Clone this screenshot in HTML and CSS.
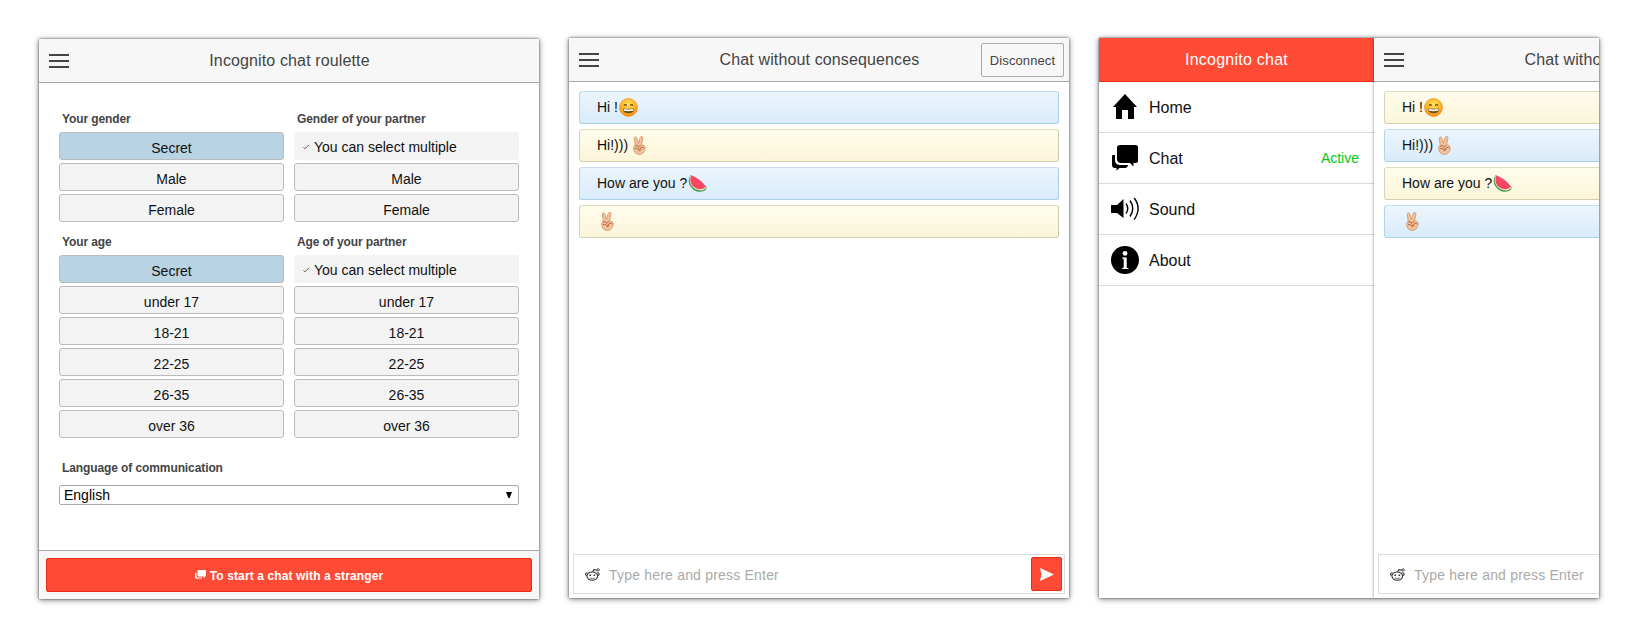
FILE: index.html
```html
<!DOCTYPE html>
<html lang="en">
<head>
<meta charset="utf-8">
<title>Incognito chat</title>
<link rel="stylesheet" href="styles.css">
</head>
<body>
<svg class="defs" width="0" height="0">
  <defs>
    <radialGradient id="face" cx=".5" cy=".35" r=".65"><stop offset="0" stop-color="#ffe35c"/><stop offset=".6" stop-color="#fdb827"/><stop offset="1" stop-color="#ee8411"/></radialGradient>
    <linearGradient id="melon" x1="1" y1="0" x2="0" y2="1"><stop offset="0" stop-color="#f0506a"/><stop offset="1" stop-color="#fb3f5e"/></linearGradient>
    <symbol id="smile" viewBox="0 0 19 19">
      <circle cx="9.5" cy="9.5" r="9" fill="url(#face)" stroke="#ef9233" stroke-width=".7"/>
      <path d="M5 7.6q1.3-2.2 2.6 0M11.3 7.6q1.3-2.2 2.6 0" fill="none" stroke="#6b3a10" stroke-width="1.2"/>
      <path d="M3.8 10.4q5.700.9 11.400 0-.6 4.900-5.700 4.900t-5.700-4.900z" fill="#6e4a1a"/>
      <path d="M4.500 11.100q5 .9 10 0l-.5 1.700q-4.500.8-9 0z" fill="#fff"/>
    </symbol>
    <symbol id="peace" viewBox="0 0 19 19">
      <path d="M4.2 10.2 5.3 9.400 4.300 2.800Q4.200 1 5.400.9 6.600.8 6.900 2.400L8.400 7.300 10.300 1.400Q10.800.1 12 .5 13.200.9 12.900 2.400L11.500 8.600Q14.800 9.200 15.200 11.200 15.500 14.700 13 17.100 11 18.800 8 18.300 5.400 17.900 4.100 14.900 2.900 11.700 4.200 10.200z" fill="#f3c39b" stroke="#cf8f66" stroke-width=".8"/>
      <path d="M5 10.300q2.500-1.600 3.600.4l2.600-1.200M4.900 12.400q2 1.300 3.700-.9M7.800 13.800q2.300-.4 3.900-2.400 1.600-.4 2.600.6M9 15.400q.4-1.500 2.400-1.900" fill="none" stroke="#a95f38" stroke-width=".9"/>
    </symbol>
    <symbol id="melon-slice" viewBox="0 0 19 19">
      <path d="M2.600 1Q-1.300 7 2.600 12.500 8 19.800 15.800 17.100 18.200 16 18.800 12.900z" fill="#3f9142"/>
      <path d="M3 1Q-.1 7 3.500 11.800 8.600 18 15.500 15.900 17.700 15 18.400 12.900z" fill="#dff0c3"/>
      <path d="M3.400 1.300Q1 7 4.200 11.200 9 16.500 15 14.800 17 14.200 17.900 12.600 12.500 5 3.400 1.300z" fill="url(#melon)"/>
    </symbol>
    <symbol id="burger" viewBox="0 0 20 14"><path d="M0 0h20v2H0zM0 6h20v2H0zM0 12h20v2H0z" fill="#444"/></symbol>
    <symbol id="alien" viewBox="0 0 14 12">
      <ellipse cx="6.800" cy="7.500" rx="5" ry="3.900" fill="#fff" stroke="#333" stroke-width="1"/>
      <path d="M2.300 4.300Q.3 4.200.6 6.200L1.500 7M11.300 4.300q2-.1 1.900 1.700L12.300 7M7 3.500 8.300 1.500 11.300 2" fill="none" stroke="#333" stroke-width="1"/>
      <circle cx="12.300" cy="1.700" r="1.100" fill="none" stroke="#333" stroke-width=".8"/>
      <path d="M4.100 6h1.500v1.500H4.100zM8 6h1.500v1.500H8z" fill="#333"/>
      <path d="M4.500 9.200q2.300 1.300 4.600 0" fill="none" stroke="#555" stroke-width=".8"/>
    </symbol>
  </defs>
</svg>

<main class="screens">
  <section class="screen setup">
    <header class="bar"><svg class="burger"><use href="#burger"/></svg><h1>Incognito chat roulette</h1></header>
    <div class="form">
      <div class="columns">
        <div class="group">
          <h2>Your gender</h2>
          <div class="option selected">Secret</div><div class="option">Male</div><div class="option">Female</div>
        </div>
        <div class="group">
          <h2>Gender of your partner</h2>
          <div class="hint"><svg class="tick" viewBox="0 0 8 6"><path d="M.5 3.500 2.300 5 7 .5" fill="none" stroke="#444" stroke-width=".9"/></svg>You can select multiple</div><div class="option">Male</div><div class="option">Female</div>
        </div>
        <div class="group">
          <h2>Your age</h2>
          <div class="option selected">Secret</div><div class="option">under 17</div><div class="option">18-21</div><div class="option">22-25</div><div class="option">26-35</div><div class="option">over 36</div>
        </div>
        <div class="group">
          <h2>Age of your partner</h2>
          <div class="hint"><svg class="tick" viewBox="0 0 8 6"><path d="M.5 3.500 2.300 5 7 .5" fill="none" stroke="#444" stroke-width=".9"/></svg>You can select multiple</div><div class="option">under 17</div><div class="option">18-21</div><div class="option">22-25</div><div class="option">26-35</div><div class="option">over 36</div>
        </div>
      </div>
      <h2 class="language">Language of communication</h2>
      <div class="select"><span>English</span><svg width="6" height="6" viewBox="0 0 6 6"><path d="M0 0h6L3.600 6H2.400z"/></svg></div>
    </div>
    <footer class="start">
      <div class="start-button"><svg width="11" height="10" viewBox="0 0 11 10"><path d="M3.500 0H10q1 0 1 1v4.500q0 1-1 1L9.500 8 8 6.500H3.500q-1 0-1-1V1q0-1 1-1zM1.500 2.500V6q0 1.500 1.500 1.500h4V8.500H3L2 9.500V8.500H1Q0 8.500 0 7.500v-4q0-1 1.500-1z" fill="#fff"/></svg><span>To start a chat with a stranger</span></div>
    </footer>
  </section>

  <section class="screen">
    <div class="chat">
      <header class="bar"><svg class="burger"><use href="#burger"/></svg><h1>Chat without consequences</h1><div class="disconnect">Disconnect</div></header>
      <div class="messages">
        <div class="message blue">Hi !<svg><use href="#smile"/></svg></div>
        <div class="message yellow">Hi!)))<svg class="hand"><use href="#peace"/></svg></div>
        <div class="message blue">How are you ?<svg><use href="#melon-slice"/></svg></div>
        <div class="message yellow"><svg><use href="#peace"/></svg></div>
      </div>
      <div class="composer"><svg class="alien"><use href="#alien"/></svg><span>Type here and press Enter</span><div class="send"><svg width="14" height="13" viewBox="0 0 14 13"><path d="M0 0 14 6.500 0 13 1.500 6.500z" fill="#fff"/></svg></div></div>
    </div>
  </section>

  <section class="screen split">
    <nav class="menu">
      <h1>Incognito chat</h1>
      <div class="item"><svg viewBox="0 0 28 28"><path d="M14 1 26 14H23V26H17V17H11V26H5V14H2z"/></svg><span>Home</span></div>
      <div class="item"><svg viewBox="0 0 28 28"><path d="M9 1H24.500Q27 1 27 3.500V16.500Q27 19 24.500 19H22.500V22.500L19 19H9.500Q6 18.500 6 15V4Q6 1 9 1zM1.500 11H4V16.500Q4.500 20.500 8.500 21H17Q17 23.500 14.500 24H8.500L5.500 26.500V24H3.500Q1 23.500 1 21.500V12z"/></svg><span>Chat</span><span class="active">Active</span></div>
      <div class="item"><svg viewBox="0 0 28 28"><path d="M0 10H6L12.500 4V23L6 18H0z"/><path d="M15 8.500Q18.500 13.500 15 18.500M19 5.500Q24.500 13.500 19 21.500M23.200 3Q31 13.500 23.200 24.500" fill="none" stroke="#000" stroke-width="1.400"/></svg><span>Sound</span></div>
      <div class="item"><svg viewBox="0 0 28 28"><circle cx="14" cy="14" r="14"/><circle cx="14" cy="7.300" r="2.400" fill="#fff"/><path d="M11 11.500H15.700V21.700L17.500 22.200V23H11V22.200L12.700 21.700V13L11 12.300z" fill="#fff"/></svg><span>About</span></div>
    </nav>
    <div class="chat">
      <header class="bar"><svg class="burger"><use href="#burger"/></svg><h1>Chat without consequences</h1></header>
      <div class="messages">
        <div class="message yellow">Hi !<svg><use href="#smile"/></svg></div>
        <div class="message blue">Hi!)))<svg class="hand"><use href="#peace"/></svg></div>
        <div class="message yellow">How are you ?<svg><use href="#melon-slice"/></svg></div>
        <div class="message blue"><svg><use href="#peace"/></svg></div>
      </div>
      <div class="composer"><svg class="alien"><use href="#alien"/></svg><span>Type here and press Enter</span></div>
    </div>
  </section>
</main>
</body>
</html>
```
FILE: styles.css
```css
* { box-sizing: border-box; }
body { margin: 0; background: #fff; color: #111; font: 14px "Liberation Sans", Arial, sans-serif; overflow: hidden; }
h1, h2 { margin: 0; }
svg { display: block; flex: none; }
.defs { position: absolute; }

.screens { display: flex; gap: 30px; padding: 38px 39px; align-items: flex-start; }
.screen { width: 500px; height: 560px; flex: none; background: #fff; box-shadow: 0 0 2px rgba(0,0,0,.55), 0 1px 6px rgba(0,0,0,.5); overflow: hidden; }
.setup { margin-top: 1px; display: flex; flex-direction: column; }

.bar { display: grid; grid-template-columns: 88px 1fr 88px; align-items: center; height: 44px; flex: none; background: #f7f7f7; border-bottom: 1px solid #aaa; }
.bar h1 { padding-left: 1px; font-size: 16px; font-weight: 400; line-height: 43px; color: #444; text-align: center; letter-spacing: .13px; white-space: nowrap; }
.burger { width: 20px; height: 14px; margin-left: 10px; }
.disconnect { width: 83px; height: 34px; border: 1px solid #aaa; border-radius: 2px; color: #444; font-size: 13px; line-height: 33px; text-align: center; letter-spacing: .1px; }

.form { flex: 1; padding: 26px 20px 0; }
.columns { display: grid; grid-template-columns: 225px 225px; column-gap: 10px; }
.group { display: flex; flex-direction: column; gap: 3px; padding-bottom: 10px; }
h2 { height: 20px; padding-left: 3px; font-size: 12px; line-height: 20px; color: #444; letter-spacing: -.1px; }
.option { height: 28px; padding-top: 2px; border: 1px solid #bbb; border-radius: 3px; background: #f3f3f3; text-align: center; line-height: 26px; }
.selected { background: #b7d3e4; }
.hint { display: flex; align-items: center; gap: 4px; height: 28px; padding-left: 9px; border-radius: 3px; background: #f3f3f3; line-height: 28px; padding-top: 2px; }
.tick { width: 7px; height: 6px; }
.language { margin-top: 10px; height: 27px; }
.select { display: flex; align-items: center; justify-content: space-between; height: 20px; padding: 0 6px 0 4px; border: 1px solid #aaa; border-radius: 2px; line-height: 18px; color: #000; }
.start { height: 49px; padding: 7px; background: #f7f7f7; border-top: 1px solid #aaa; }
.start-button { display: flex; justify-content: center; align-items: center; gap: 4px; height: 34px; border: 1px solid #ee2a12; border-radius: 2px; background: #ff4b36; color: #fff; font-size: 12px; font-weight: 700; line-height: 32px; letter-spacing: .12px; }
.start-button span { padding-top: 1px; }

.chat { width: 500px; height: 560px; flex: none; display: flex; flex-direction: column; background: #fff; }
.messages { flex: 1; display: flex; flex-direction: column; gap: 5px; padding: 9px 10px; }
.message { display: flex; align-items: center; height: 33px; padding-left: 17px; border: 1px solid; border-radius: 3px; line-height: 31px; }
.message svg { width: 19px; height: 19px; margin-left: 1px; }
.message .hand { margin-left: 2px; }
.blue { border-color: #c5dded #a9cee6 #a9cee6 #b4d4e8; background: linear-gradient(#ecf5fd, #d9ecfa); }
.yellow { border-color: #dedcbf #cfccb0 #d3cfae #d6d4b8; background: linear-gradient(#fefcec, #fbf5d9); }
.composer { display: flex; align-items: center; height: 40px; margin: 0 4px 4px; padding: 0 2px 0 11px; border: 1px solid #ddd; color: #aaa; }
.composer span { flex: 1; margin-left: 9px; padding-top: 2px; letter-spacing: .2px; }
.alien { width: 15px; height: 13px; }
.send { display: flex; align-items: center; justify-content: center; width: 31px; height: 34px; border: 1px solid #ee2a12; border-radius: 2px; background: #ff4b36; }

.split { display: flex; }
.menu { width: 275px; flex: none; }
.menu h1 { height: 44px; border-bottom: 1px solid #ee2a12; background: #ff4b36; color: #fff; font-size: 16px; font-weight: 400; line-height: 43px; text-align: center; letter-spacing: .25px; }
.item { display: flex; align-items: center; gap: 10px; height: 51px; padding: 0 15px 0 12px; border-bottom: 1px solid #dadada; font-size: 16px; }
.item svg { width: 28px; height: 28px; }
.item span { padding-top: 1px; }
.item .active { margin-left: auto; padding-top: 0; color: #00c814; font-size: 14px; }
.split .chat { box-shadow: 0 0 3px rgba(0,0,0,.45); }
```
